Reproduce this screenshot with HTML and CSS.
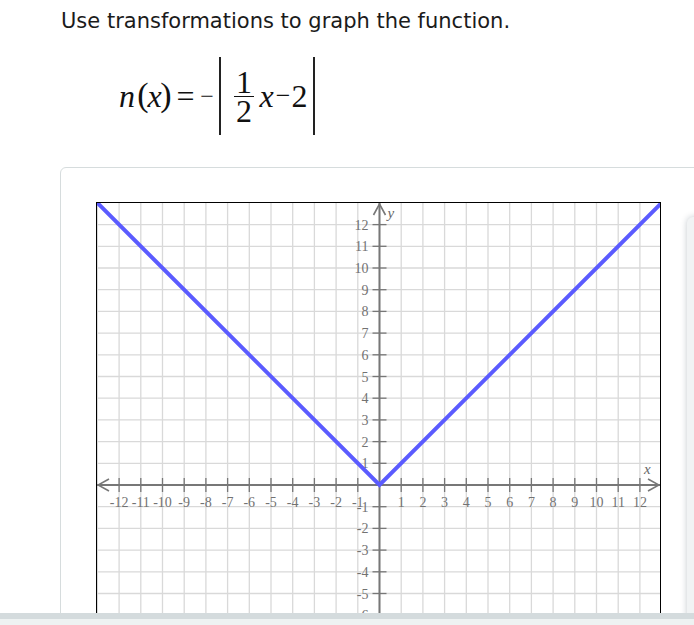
FILE: index.html
```html
<!DOCTYPE html>
<html lang="en">
<head>
<meta charset="utf-8">
<title>Graph the function</title>
<link rel="stylesheet" href="styles.css">
</head>
<body>
<h1 class="title">Use transformations to graph the function.</h1>
<div class="math">
  <span class="g i w-n">n</span>
  <span class="g paren w-lp">(</span>
  <span class="g i w-x1">x</span>
  <span class="g paren w-rp">)</span>
  <span class="g w-eq">=</span>
  <span class="g w-neg">−</span>
  <span class="abs">
    <span class="frac">
      <span class="num">1</span>
      <span class="bar"></span>
      <span class="den">2</span>
    </span>
    <span class="g i w-x2">x</span>
    <span class="g w-minus">−</span>
    <span class="g w-two">2</span>
  </span>
</div>
<section class="card">
  <div class="plot-box">
    <svg class="plot" width="563" height="563" xmlns="http://www.w3.org/2000/svg"></svg>
  </div>
</section>
<div class="side-panel"></div>
<div class="footer-bar"></div>
<script src="script.js"></script>
</body>
</html>
```
FILE: styles.css
```css
html, body {
  margin: 0;
  padding: 0;
  background: #ffffff;
}
body {
  font-family: "DejaVu Sans", Verdana, sans-serif;
  color: #1b1b1b;
  overflow: hidden;
}
.title {
  margin: 0;
  padding: 9px 0 0 61px;
  font-size: 21px;
  font-weight: normal;
  line-height: 24px;
}
.math {
  display: flex;
  align-items: center;
  height: 78px;
  margin-top: 24px;
  padding-left: 118px;
  font-family: "Liberation Serif", "Times New Roman", serif;
  font-size: 32px;
  line-height: 1;
  color: #111;
}
.g {
  display: flex;
  justify-content: center;
  flex: none;
  font-family: "Liberation Serif", "Times New Roman", serif;
}
.i { font-style: italic; }
.paren {
  font-size: 34px;
  padding-bottom: 2px;
}
.w-n { width: 18px; }
.w-lp { width: 8px; margin-left: 3px; }
.w-x1 { width: 15px; }
.w-rp { width: 8px; }
.w-eq { width: 17px; margin-left: 7px; }
.w-neg { width: 10px; margin-left: 8px; font-size: 24px; }
.abs {
  display: flex;
  align-items: center;
  height: 78px;
  margin-left: 7px;
  padding: 0 6px 0 13px;
  border-left: 2px solid #222;
  border-right: 2px solid #222;
}
.frac {
  display: flex;
  flex-direction: column;
  align-items: center;
  width: 20px;
}
.num, .den {
  line-height: 24px;
}
.bar {
  align-self: stretch;
  height: 1px;
  margin: 2px 0;
  background: #111;
}
.w-x2 { width: 15px; margin-left: 5px; }
.w-minus { width: 12px; margin-left: 3px; font-size: 26px; }
.w-two { width: 15px; margin-left: 3px; }

.card {
  margin: 32px 0 0 60px;
  width: 700px;
  height: 600px;
  border: 1px solid #d6dcdd;
  border-radius: 6px;
  padding: 34px 0 0 35px;
  box-sizing: border-box;
}
.plot-box {
  width: 563px;
  height: 563px;
  border: 1px solid #000;
}
.plot {
  display: block;
  overflow: hidden;
}
.grid { stroke: #d9d9d9; stroke-width: 1.3; }
.axis { stroke: #777; stroke-width: 2; }
.tick { stroke: #777; stroke-width: 1.3; }
.arrow { fill: none; stroke: #777; stroke-width: 1.6; }
.lbl {
  font-family: "Liberation Serif", "Times New Roman", serif;
  font-size: 14px;
  fill: #727272;
}
.axis-name {
  font-family: "Liberation Serif", "Times New Roman", serif;
  font-style: italic;
  font-size: 15px;
  fill: #666;
}
.curve {
  fill: none;
  stroke: #5b5bff;
  stroke-width: 4;
  stroke-linejoin: miter;
}
.side-panel {
  position: absolute;
  left: 687px;
  top: 217px;
  width: 30px;
  height: 420px;
  background: #f1f3f4;
  border-radius: 6px 0 0 0;
  box-shadow: 0 0 6px rgba(20, 40, 60, 0.25);
}
.footer-bar {
  position: fixed;
  left: 0;
  right: 0;
  bottom: 0;
  height: 6px;
  background: #eef2f2;
  border-top: 6px solid #d4dbdd;
}
```
FILE: script.js
```js
(function () {
  var NS = 'http://www.w3.org/2000/svg';
  var svg = document.querySelector('.plot');
  var U = 21.7, OX = 282.5, OY = 282, W = 563, H = 563;

  function el(tag, attrs, text) {
    var e = document.createElementNS(NS, tag);
    for (var k in attrs) e.setAttribute(k, attrs[k]);
    if (text !== undefined) e.textContent = text;
    svg.appendChild(e);
    return e;
  }

  var i, x, y;
  for (i = -13; i <= 13; i++) {
    x = OX + i * U;
    if (x > 0 && x < W) el('line', { x1: x, y1: 0, x2: x, y2: H, 'class': 'grid' });
    y = OY - i * U;
    if (y > 0 && y < H) el('line', { x1: 0, y1: y, x2: W, y2: y, 'class': 'grid' });
  }

  el('line', { x1: 0, y1: OY, x2: W, y2: OY, 'class': 'axis' });
  el('line', { x1: OX, y1: 0, x2: OX, y2: H, 'class': 'axis' });

  el('polyline', { points: (OX - 6) + ',12 ' + OX + ',1 ' + (OX + 6) + ',12', 'class': 'arrow' });
  el('polyline', { points: (OX - 6) + ',' + (H - 12) + ' ' + OX + ',' + (H - 1) + ' ' + (OX + 6) + ',' + (H - 12), 'class': 'arrow' });
  el('polyline', { points: (W - 12) + ',' + (OY - 6) + ' ' + (W - 1) + ',' + OY + ' ' + (W - 12) + ',' + (OY + 6), 'class': 'arrow' });
  el('polyline', { points: '12,' + (OY - 6) + ' 1,' + OY + ' 12,' + (OY + 6), 'class': 'arrow' });

  for (i = -12; i <= 12; i++) {
    if (i === 0) continue;
    x = OX + i * U;
    el('line', { x1: x, y1: OY - 7, x2: x, y2: OY + 7, 'class': 'tick' });
    el('text', { x: x, y: OY + 22, 'class': 'lbl', 'text-anchor': 'middle' }, String(i));
    y = OY - i * U;
    el('line', { x1: OX - 7, y1: y, x2: OX + 7, y2: y, 'class': 'tick' });
    el('text', { x: OX - 11, y: y + 5, 'class': 'lbl', 'text-anchor': 'end' }, String(i));
  }

  el('text', { x: OX + 8, y: 15, 'class': 'axis-name' }, 'y');
  el('text', { x: 547, y: OY - 11, 'class': 'axis-name' }, 'x');

  var pts = [[-13.5, 13.5], [0, 0], [13.5, 13.5]].map(function (p) {
    return (OX + p[0] * U) + ',' + (OY - p[1] * U);
  }).join(' ');
  el('polyline', { points: pts, 'class': 'curve' });
})();
```
